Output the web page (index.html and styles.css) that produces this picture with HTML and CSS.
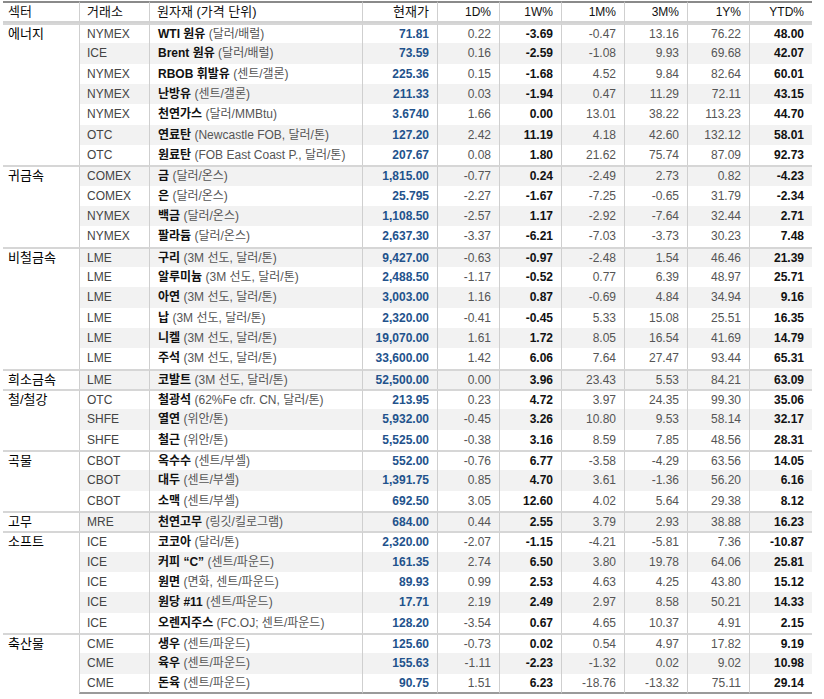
FILE: index.html
```html
<!DOCTYPE html>
<html lang="ko">
<head>
<meta charset="utf-8">
<title>원자재 가격</title>
<link rel="stylesheet" href="styles.css">
</head>
<body>
<table class="t">
<colgroup>
<col class="c-sec"><col class="c-ex"><col class="c-name"><col class="c-px">
<col class="c-d"><col class="c-w"><col class="c-m"><col class="c-3m"><col class="c-y"><col class="c-ytd">
</colgroup>
<thead>
<tr class="hd">
<th class="sec ko">섹터</th><th class="l ko">거래소</th><th class="l ko">원자재 (가격 단위)</th><th class="ko">현재가</th>
<th>1D%</th><th>1W%</th><th>1M%</th><th>3M%</th><th>1Y%</th><th>YTD%</th>
</tr>
</thead>
<tbody>
<tr class="g"><td class="sec" rowspan="7">에너지</td><td class="ex">NYMEX</td><td class="nm"><b>WTI 원유</b> (달러/배럴)</td><td class="px">71.81</td><td>0.22</td><td class="b">-3.69</td><td>-0.47</td><td>13.16</td><td>76.22</td><td class="b">48.00</td></tr>
<tr class="s"><td class="ex">ICE</td><td class="nm"><b>Brent 원유</b> (달러/배럴)</td><td class="px">73.59</td><td>0.16</td><td class="b">-2.59</td><td>-1.08</td><td>9.93</td><td>69.68</td><td class="b">42.07</td></tr>
<tr><td class="ex">NYMEX</td><td class="nm"><b>RBOB 휘발유</b> (센트/갤론)</td><td class="px">225.36</td><td>0.15</td><td class="b">-1.68</td><td>4.52</td><td>9.84</td><td>82.64</td><td class="b">60.01</td></tr>
<tr class="s"><td class="ex">NYMEX</td><td class="nm"><b>난방유</b> (센트/갤론)</td><td class="px">211.33</td><td>0.03</td><td class="b">-1.94</td><td>0.47</td><td>11.29</td><td>72.11</td><td class="b">43.15</td></tr>
<tr><td class="ex">NYMEX</td><td class="nm"><b>천연가스</b> (달러/MMBtu)</td><td class="px">3.6740</td><td>1.66</td><td class="b">0.00</td><td>13.01</td><td>38.22</td><td>113.23</td><td class="b">44.70</td></tr>
<tr class="s"><td class="ex">OTC</td><td class="nm"><b>연료탄</b> (Newcastle FOB, 달러/톤)</td><td class="px">127.20</td><td>2.42</td><td class="b">11.19</td><td>4.18</td><td>42.60</td><td>132.12</td><td class="b">58.01</td></tr>
<tr><td class="ex">OTC</td><td class="nm"><b>원료탄</b> (FOB East Coast P., 달러/톤)</td><td class="px">207.67</td><td>0.08</td><td class="b">1.80</td><td>21.62</td><td>75.74</td><td>87.09</td><td class="b">92.73</td></tr>

<tr class="g s"><td class="sec" rowspan="4">귀금속</td><td class="ex">COMEX</td><td class="nm"><b>금</b> (달러/온스)</td><td class="px">1,815.00</td><td>-0.77</td><td class="b">0.24</td><td>-2.49</td><td>2.73</td><td>0.82</td><td class="b">-4.23</td></tr>
<tr><td class="ex">COMEX</td><td class="nm"><b>은</b> (달러/온스)</td><td class="px">25.795</td><td>-2.27</td><td class="b">-1.67</td><td>-7.25</td><td>-0.65</td><td>31.79</td><td class="b">-2.34</td></tr>
<tr class="s"><td class="ex">NYMEX</td><td class="nm"><b>백금</b> (달러/온스)</td><td class="px">1,108.50</td><td>-2.57</td><td class="b">1.17</td><td>-2.92</td><td>-7.64</td><td>32.44</td><td class="b">2.71</td></tr>
<tr><td class="ex">NYMEX</td><td class="nm"><b>팔라듐</b> (달러/온스)</td><td class="px">2,637.30</td><td>-3.37</td><td class="b">-6.21</td><td>-7.03</td><td>-3.73</td><td>30.23</td><td class="b">7.48</td></tr>

<tr class="g s"><td class="sec" rowspan="6">비철금속</td><td class="ex">LME</td><td class="nm"><b>구리</b> (3M 선도, 달러/톤)</td><td class="px">9,427.00</td><td>-0.63</td><td class="b">-0.97</td><td>-2.48</td><td>1.54</td><td>46.46</td><td class="b">21.39</td></tr>
<tr><td class="ex">LME</td><td class="nm"><b>알루미늄</b> (3M 선도, 달러/톤)</td><td class="px">2,488.50</td><td>-1.17</td><td class="b">-0.52</td><td>0.77</td><td>6.39</td><td>48.97</td><td class="b">25.71</td></tr>
<tr class="s"><td class="ex">LME</td><td class="nm"><b>아연</b> (3M 선도, 달러/톤)</td><td class="px">3,003.00</td><td>1.16</td><td class="b">0.87</td><td>-0.69</td><td>4.84</td><td>34.94</td><td class="b">9.16</td></tr>
<tr><td class="ex">LME</td><td class="nm"><b>납</b> (3M 선도, 달러/톤)</td><td class="px">2,320.00</td><td>-0.41</td><td class="b">-0.45</td><td>5.33</td><td>15.08</td><td>25.51</td><td class="b">16.35</td></tr>
<tr class="s"><td class="ex">LME</td><td class="nm"><b>니켈</b> (3M 선도, 달러/톤)</td><td class="px">19,070.00</td><td>1.61</td><td class="b">1.72</td><td>8.05</td><td>16.54</td><td>41.69</td><td class="b">14.79</td></tr>
<tr><td class="ex">LME</td><td class="nm"><b>주석</b> (3M 선도, 달러/톤)</td><td class="px">33,600.00</td><td>1.42</td><td class="b">6.06</td><td>7.64</td><td>27.47</td><td>93.44</td><td class="b">65.31</td></tr>

<tr class="g s"><td class="sec">희소금속</td><td class="ex">LME</td><td class="nm"><b>코발트</b> (3M 선도, 달러/톤)</td><td class="px">52,500.00</td><td>0.00</td><td class="b">3.96</td><td>23.43</td><td>5.53</td><td>84.21</td><td class="b">63.09</td></tr>

<tr class="g"><td class="sec" rowspan="3">철/철강</td><td class="ex">OTC</td><td class="nm"><b>철광석</b> (62%Fe cfr. CN, 달러/톤)</td><td class="px">213.95</td><td>0.23</td><td class="b">4.72</td><td>3.97</td><td>24.35</td><td>99.30</td><td class="b">35.06</td></tr>
<tr class="s"><td class="ex">SHFE</td><td class="nm"><b>열연</b> (위안/톤)</td><td class="px">5,932.00</td><td>-0.45</td><td class="b">3.26</td><td>10.80</td><td>9.53</td><td>58.14</td><td class="b">32.17</td></tr>
<tr><td class="ex">SHFE</td><td class="nm"><b>철근</b> (위안/톤)</td><td class="px">5,525.00</td><td>-0.38</td><td class="b">3.16</td><td>8.59</td><td>7.85</td><td>48.56</td><td class="b">28.31</td></tr>

<tr class="g"><td class="sec" rowspan="3">곡물</td><td class="ex">CBOT</td><td class="nm"><b>옥수수</b> (센트/부셸)</td><td class="px">552.00</td><td>-0.76</td><td class="b">6.77</td><td>-3.58</td><td>-4.29</td><td>63.56</td><td class="b">14.05</td></tr>
<tr class="s"><td class="ex">CBOT</td><td class="nm"><b>대두</b> (센트/부셸)</td><td class="px">1,391.75</td><td>0.85</td><td class="b">4.70</td><td>3.61</td><td>-1.36</td><td>56.20</td><td class="b">6.16</td></tr>
<tr><td class="ex">CBOT</td><td class="nm"><b>소맥</b> (센트/부셸)</td><td class="px">692.50</td><td>3.05</td><td class="b">12.60</td><td>4.02</td><td>5.64</td><td>29.38</td><td class="b">8.12</td></tr>

<tr class="g s"><td class="sec">고무</td><td class="ex">MRE</td><td class="nm"><b>천연고무</b> (링깃/킬로그램)</td><td class="px">684.00</td><td>0.44</td><td class="b">2.55</td><td>3.79</td><td>2.93</td><td>38.88</td><td class="b">16.23</td></tr>

<tr class="g"><td class="sec" rowspan="5">소프트</td><td class="ex">ICE</td><td class="nm"><b>코코아</b> (달러/톤)</td><td class="px">2,320.00</td><td>-2.07</td><td class="b">-1.15</td><td>-4.21</td><td>-5.81</td><td>7.36</td><td class="b">-10.87</td></tr>
<tr class="s"><td class="ex">ICE</td><td class="nm"><b>커피 “C”</b> (센트/파운드)</td><td class="px">161.35</td><td>2.74</td><td class="b">6.50</td><td>3.80</td><td>19.78</td><td>64.06</td><td class="b">25.81</td></tr>
<tr><td class="ex">ICE</td><td class="nm"><b>원면</b> (면화, 센트/파운드)</td><td class="px">89.93</td><td>0.99</td><td class="b">2.53</td><td>4.63</td><td>4.25</td><td>43.80</td><td class="b">15.12</td></tr>
<tr class="s"><td class="ex">ICE</td><td class="nm"><b>원당 #11</b> (센트/파운드)</td><td class="px">17.71</td><td>2.19</td><td class="b">2.49</td><td>2.97</td><td>8.58</td><td>50.21</td><td class="b">14.33</td></tr>
<tr><td class="ex">ICE</td><td class="nm"><b>오렌지주스</b> (FC.OJ; 센트/파운드)</td><td class="px">128.20</td><td>-3.54</td><td class="b">0.67</td><td>4.65</td><td>10.37</td><td>4.91</td><td class="b">2.15</td></tr>

<tr class="g"><td class="sec" rowspan="3">축산물</td><td class="ex">CME</td><td class="nm"><b>생우</b> (센트/파운드)</td><td class="px">125.60</td><td>-0.73</td><td class="b">0.02</td><td>0.54</td><td>4.97</td><td>17.82</td><td class="b">9.19</td></tr>
<tr class="s"><td class="ex">CME</td><td class="nm"><b>육우</b> (센트/파운드)</td><td class="px">155.63</td><td>-1.11</td><td class="b">-2.23</td><td>-1.32</td><td>0.02</td><td>9.02</td><td class="b">10.98</td></tr>
<tr class="last"><td class="ex">CME</td><td class="nm"><b>돈육</b> (센트/파운드)</td><td class="px">90.75</td><td>1.51</td><td class="b">6.23</td><td>-18.76</td><td>-13.32</td><td>75.11</td><td class="b">29.14</td></tr>
</tbody>
</table>
</body>
</html>
```

FILE: styles.css
```css
html, body {
  margin: 0;
  padding: 0;
  background: #ffffff;
}
body {
  padding: 1px 0 0 3px;
  font-family: "Liberation Sans", "Noto Sans CJK KR", sans-serif;
  font-size: 12px;
  color: #555555;
}
.t {
  border-collapse: separate;
  border-spacing: 0;
  table-layout: fixed;
  width: 809px;
}
.c-sec { width: 76px; }
.c-ex { width: 70px; }
.c-name { width: 213px; }
.c-px { width: 75px; }
.c-d { width: 62px; }
.c-w { width: 62px; }
.c-m { width: 63px; }
.c-3m { width: 63px; }
.c-y { width: 62px; }
.c-ytd { width: 63px; }

.t th, .t td {
  padding: 0 8px 0 7px;
  line-height: 14px;
  white-space: nowrap;
  overflow: hidden;
  text-align: right;
  vertical-align: middle;
  border-left: 1px solid #cfcfcf;
}
.t th.sec, .t td.sec {
  border-left: none;
  text-align: left;
  padding-left: 5px;
  background: #ffffff;
}
.hd { height: 22px; }
.t th {
  font-weight: normal;
  color: #111111;
  border-top: 2px solid #8a8a8a;
  border-bottom: 2px solid #d2d2d2;
}
.t th.ko { font-size: 13px; }
.t th.l { text-align: left; }

tbody tr { height: 20.33px; }
.t td.sec {
  vertical-align: top;
  padding-top: 2px;
  font-size: 13px;
  line-height: 16px;
  color: #000000;
}
.g td { border-top: 2px solid #d6d6d6; }
.g td.sec { padding-top: 1px; }
.s td { background: #f2f2f2; }
.s td.sec { background: #ffffff; }
.last td { border-bottom: 2px solid #9a9a9a; }

.t td.ex {
  text-align: left;
  color: #444444;
}
.t td.nm {
  text-align: left;
  padding-left: 8px;
  color: #555555;
}
.nm b {
  color: #111111;
  font-weight: bold;
}
.t td.px {
  color: #22528c;
  font-weight: bold;
}
.t td.b {
  color: #111111;
  font-weight: bold;
}
```
